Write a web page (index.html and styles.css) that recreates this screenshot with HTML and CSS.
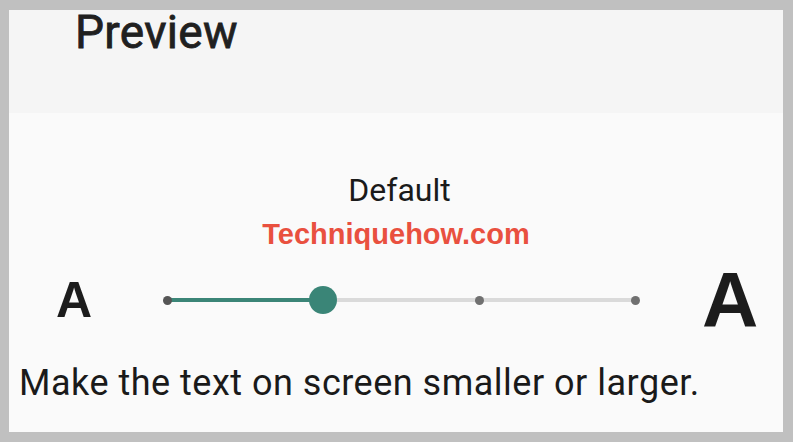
FILE: index.html
```html
<!DOCTYPE html>
<html>
<head>
<meta charset="utf-8">
<link rel="stylesheet" href="styles.css">
</head>
<body>
<div class="frame">
  <div class="screen">
    <div class="header">
      <h1 class="title">Preview</h1>
    </div>
    <div class="content">
      <div class="label">Default</div>
      <div class="brand">Techniquehow.com</div>
      <div class="slider-row">
        <span class="a-small">A</span>
        <div class="track">
          <span class="stop"><span class="dot dot-first"></span></span>
          <span class="stop"><span class="thumb"></span></span>
          <span class="stop"><span class="dot"></span></span>
          <span class="stop"><span class="dot"></span></span>
        </div>
        <span class="a-big">A</span>
      </div>
      <p class="hint">Make the text on screen smaller or larger.</p>
    </div>
  </div>
</div>
</body>
</html>
```
FILE: styles.css
```css
html, body {
  margin: 0;
  padding: 0;
}
body {
  background: #c0c0c0;
  font-family: Roboto, "Noto Sans", sans-serif;
  color: #1c1c1c;
}
.frame {
  padding: 10px 10px 10px 9px;
  height: 442px;
  box-sizing: border-box;
}
.screen {
  height: 422px;
  background: #fafafa;
  display: flex;
  flex-direction: column;
}
.header {
  height: 103px;
  background: #f5f5f5;
  padding-left: 66px;
  box-sizing: border-box;
}
.title {
  margin: 0;
  font-size: 46px;
  line-height: 44px;
  font-weight: 400;
  -webkit-text-stroke: 0.8px #202020;
  letter-spacing: 0.3px;
  color: #202020;
}
.content {
  display: flex;
  flex-direction: column;
  padding-top: 59px;
}
.label {
  text-align: center;
  font-size: 32px;
  line-height: 36px;
  color: #1a1a1a;
  padding-left: 7px;
}
.brand {
  margin-top: 9px;
  text-align: center;
  font-family: "Liberation Sans", Arial, sans-serif;
  font-weight: 700;
  font-size: 29px;
  line-height: 34px;
  color: #e9503f;
}
.slider-row {
  margin-top: 19px;
  height: 60px;
  display: flex;
  align-items: center;
  padding-left: 47px;
}
.a-small {
  font-family: "Liberation Sans", Arial, sans-serif;
  font-weight: 700;
  font-size: 50px;
  line-height: 50px;
  width: 111px;
  color: #1c1c1c;
}
.track {
  width: 468px;
  height: 28px;
  display: flex;
  justify-content: space-between;
  align-items: center;
  background: linear-gradient(to right, #3b8577 156px, #dadada 156px) no-repeat center / 100% 4px;
}
.stop {
  width: 0;
  display: flex;
  justify-content: center;
  align-items: center;
}
.dot {
  flex: none;
  width: 9px;
  height: 9px;
  border-radius: 50%;
  background: #707070;
}
.dot-first {
  background: #555;
}
.thumb {
  flex: none;
  width: 28px;
  height: 28px;
  border-radius: 50%;
  background: #3a8577;
}
.a-big {
  margin-left: 67px;
  font-family: "Liberation Sans", Arial, sans-serif;
  font-weight: 700;
  font-size: 78px;
  line-height: 60px;
  color: #1c1c1c;
}
.hint {
  margin: 33px 0 0 10px;
  font-size: 36px;
  line-height: 40px;
  letter-spacing: 0.5px;
  color: #1a1a1a;
}
```
